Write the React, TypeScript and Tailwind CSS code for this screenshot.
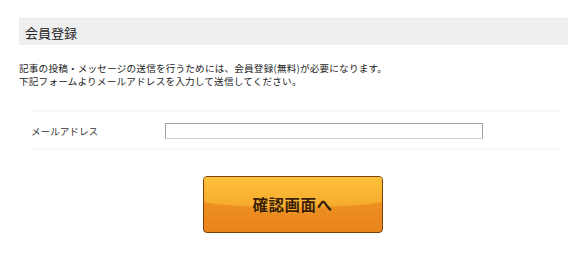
export default function App() {
  const font = { fontFamily: '"Noto Sans CJK JP", "Noto Sans", sans-serif' };
  return (
    <div className="w-[580px] h-[253px] bg-white overflow-hidden text-[#333]" style={font}>
      <div className="pt-[18px] pl-[19px] pr-[12px]">
        <div className="h-[27px] bg-[#efefef] border-t border-[#e6e6e6] flex items-center pl-[6px]">
          <span className="text-[13px] leading-none text-[#222]">会員登録</span>
        </div>
        <div className="mt-[17px] text-[9.6px] leading-[13px] text-[#222] tracking-[0.2px]">
          <p>記事の投稿・メッセージの送信を行うためには、会員登録(無料)が必要になります。</p>
          <p>下記フォームよりメールアドレスを入力して送信してください。</p>
        </div>
        <div className="mt-[22px] ml-[11px] mr-[8px] h-[40px] border-t-[2px] border-b-[2px] border-[#f8f8f8] flex items-center pt-[2px]">
          <span className="w-[135px] pl-[1px] text-[9.6px] text-[#333]">メールアドレス</span>
          <div className="w-[318px] h-[16px] border border-[#a0a0a0] border-b-[#cfcfcf] bg-white" />
        </div>
      </div>
      <div className="flex justify-center pl-[5px] mt-[26px]">
        <button
          className="relative w-[180px] h-[57px] rounded-[4px] border border-[#7a400c] overflow-hidden bg-gradient-to-b from-[#f29a26] to-[#e8841c] flex items-center justify-center"
        >
          <span className="absolute left-0 right-0 top-0 h-[30px] bg-gradient-to-b from-[#fcc03a] to-[#f7aa2c] rounded-b-[50%_6px]" />
          <span className="relative text-[15.5px] font-bold text-[#3d1c02] tracking-[0.5px] [text-shadow:0_0_2px_#f5c04a]">
            確認画面へ
          </span>
        </button>
      </div>
    </div>
  );
}
